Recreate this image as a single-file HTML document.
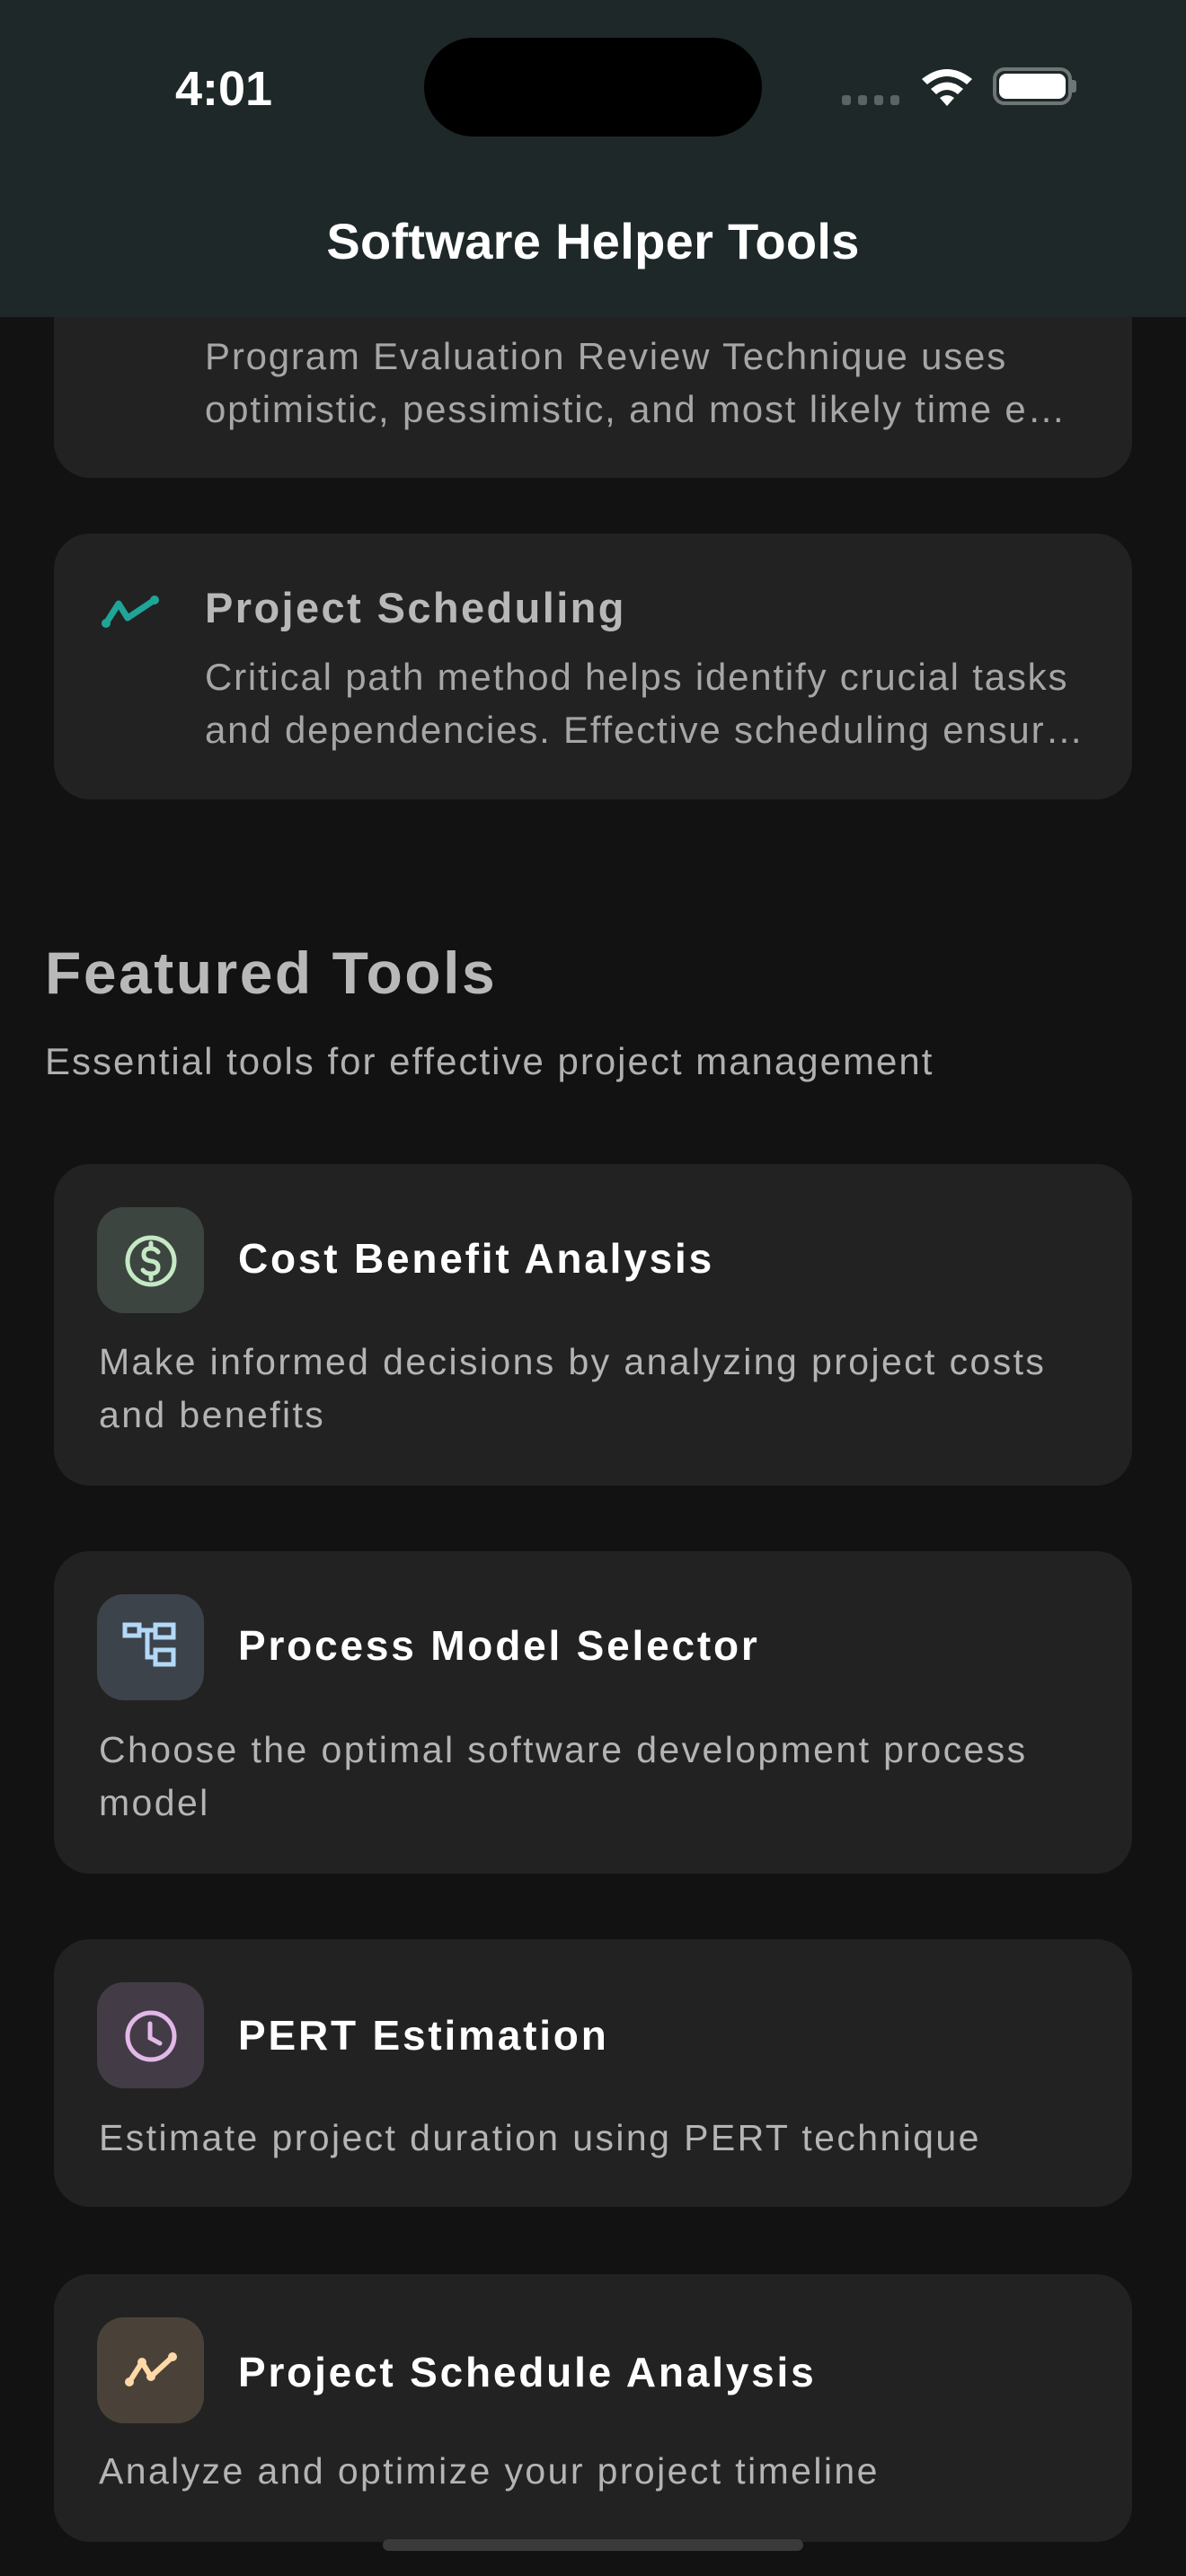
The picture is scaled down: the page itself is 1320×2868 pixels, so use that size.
<!DOCTYPE html>
<html><head><meta charset="utf-8"><style>
*{margin:0;padding:0;box-sizing:border-box}
body{width:1320px;height:2868px;background:#121212;position:relative;overflow:hidden;font-family:"Liberation Sans",sans-serif}
.abs{position:absolute}
.hdr{left:0;top:0;width:1320px;height:353px;background:#1f2828;z-index:5}
.card{position:absolute;left:60px;width:1200px;background:#222222;border-radius:40px}
.tdesc{position:absolute;left:168px;color:#a6a6a6;font-size:42px;letter-spacing:1.8px;white-space:nowrap;line-height:59px}
.fcard .ib{position:absolute;left:48px;top:48px;width:119px;height:118px;border-radius:30px}
.fcard .t{position:absolute;left:205px;color:#fff;font-weight:bold;font-size:46px;letter-spacing:2.8px;white-space:nowrap}
.fcard .d{position:absolute;left:50px;color:#b4b4b4;font-size:41px;letter-spacing:2.4px;line-height:59px;white-space:nowrap}
</style></head><body>
<div class="abs hdr">
  <div class="abs" style="left:195px;top:68px;color:#fff;font-size:54px;font-weight:bold">4:01</div>
  <div class="abs" style="left:472px;top:42px;width:376px;height:110px;border-radius:55px;background:#000"></div>
  <div class="abs" style="left:937px;top:106px;width:10px;height:11px;border-radius:3px;background:#5a6462"></div>
  <div class="abs" style="left:955px;top:106px;width:10px;height:11px;border-radius:3px;background:#5a6462"></div>
  <div class="abs" style="left:973px;top:106px;width:10px;height:11px;border-radius:3px;background:#5a6462"></div>
  <div class="abs" style="left:991px;top:106px;width:10px;height:11px;border-radius:3px;background:#5a6462"></div>
  <svg class="abs" style="left:1024px;top:74px" width="60" height="46" viewBox="0 0 60 46"><path d="M2 14 Q30 -8 58 14 L52 20 Q30 2 8 20Z M12 25 Q30 10 48 25 L42 31 Q30 21 18 31Z M22 35 Q30 29 38 35 L30 44Z" fill="#fff"/></svg>
  <div class="abs" style="left:1105px;top:75px;width:88px;height:42px;border:4px solid #6e7675;border-radius:13px"></div>
  <div class="abs" style="left:1112px;top:82px;width:74px;height:28px;background:#fff;border-radius:8px"></div>
  <div class="abs" style="left:1193px;top:89px;width:5px;height:14px;background:#6e7675;border-radius:0 3px 3px 0"></div>
  <div class="abs" style="left:0;top:236px;width:1320px;text-align:center;color:#fff;font-size:56px;font-weight:bold;letter-spacing:0.3px">Software Helper Tools</div>
</div>

<div class="card" style="top:200px;height:332px">
  <div class="tdesc" style="top:167px">Program Evaluation Review Technique uses</div>
  <div class="tdesc" style="top:226px">optimistic, pessimistic, and most likely time e…</div>
</div>
<div class="card" style="top:594px;height:296px">
  <svg class="abs" style="left:50px;top:64px" width="72" height="44" viewBox="0 0 72 44"><path d="M8 36 L22 14 L32 30 L62 10" stroke="#1fa598" stroke-width="7" fill="none" stroke-linecap="round" stroke-linejoin="round"/><circle cx="8" cy="36" r="5" fill="#1fa598"/><circle cx="62" cy="10" r="5" fill="#1fa598"/></svg>
  <div class="abs" style="left:168px;top:55px;color:#b8b8b8;font-weight:bold;font-size:47px;letter-spacing:2.4px">Project Scheduling</div>
  <div class="tdesc" style="top:130px">Critical path method helps identify crucial tasks</div>
  <div class="tdesc" style="top:189px">and dependencies. Effective scheduling ensur…</div>
</div>

<div class="abs" style="left:50px;top:1045px;color:#b8b8b8;font-weight:bold;font-size:66px;letter-spacing:2.5px">Featured Tools</div>
<div class="abs" style="left:50px;top:1158px;color:#b0b0b0;font-size:42px;letter-spacing:2px">Essential tools for effective project management</div>

<div class="card fcard" style="top:1296px;height:358px">
  <div class="ib" style="background:#3d4540"></div>
  <svg class="abs" style="left:76px;top:76px" width="64" height="64" viewBox="0 0 64 64"><circle cx="32" cy="32" r="26" stroke="#c5e8c5" stroke-width="5" fill="none"/><path d="M40 22 Q37 18 32 18 Q24 18 24 25 Q24 31 32 32 Q40 33 40 39 Q40 46 32 46 Q26 46 23 42 M32 12 V18 M32 46 V52" stroke="#c5e8c5" stroke-width="5" fill="none" stroke-linecap="round"/></svg>
  <div class="t" style="top:78px">Cost Benefit Analysis</div>
  <div class="d" style="top:191px">Make informed decisions by analyzing project costs</div>
  <div class="d" style="top:250px">and benefits</div>
</div>
<div class="card fcard" style="top:1727px;height:359px">
  <div class="ib" style="background:#3c434b"></div>
  <svg class="abs" style="left:76px;top:76px" width="64" height="64" viewBox="0 0 64 64"><g stroke="#b3d9f7" stroke-width="5" fill="none"><rect x="3" y="6" width="16" height="12"/><rect x="37" y="6" width="20" height="14"/><rect x="37" y="34" width="20" height="16"/><path d="M19 12 H37 M28 12 V42 H37"/></g></svg>
  <div class="t" style="top:78px">Process Model Selector</div>
  <div class="d" style="top:192px">Choose the optimal software development process</div>
  <div class="d" style="top:251px">model</div>
</div>
<div class="card fcard" style="top:2159px;height:298px">
  <div class="ib" style="background:#433c47"></div>
  <svg class="abs" style="left:76px;top:76px" width="64" height="64" viewBox="0 0 64 64"><circle cx="32" cy="32" r="26" stroke="#e3b8e8" stroke-width="5" fill="none"/><path d="M31 18 V34 L42 40" stroke="#e3b8e8" stroke-width="5" fill="none" stroke-linecap="round"/></svg>
  <div class="t" style="top:80px">PERT Estimation</div>
  <div class="d" style="top:192px">Estimate project duration using PERT technique</div>
</div>
<div class="card fcard" style="top:2532px;height:298px">
  <div class="ib" style="background:#4a4238"></div>
  <svg class="abs" style="left:76px;top:80px" width="64" height="56" viewBox="0 0 64 56"><path d="M8 40 L22 18 L32 34 L56 12" stroke="#ffd8a8" stroke-width="6" fill="none" stroke-linecap="round" stroke-linejoin="round"/><circle cx="8" cy="40" r="5" fill="#ffd8a8"/><circle cx="22" cy="18" r="5" fill="#ffd8a8"/><circle cx="32" cy="34" r="5" fill="#ffd8a8"/><circle cx="56" cy="12" r="5" fill="#ffd8a8"/></svg>
  <div class="t" style="top:82px">Project Schedule Analysis</div>
  <div class="d" style="top:190px">Analyze and optimize your project timeline</div>
</div>
<div class="abs" style="left:426px;top:2827px;width:468px;height:13px;border-radius:7px;background:#3a3a3a"></div>
</body></html>
